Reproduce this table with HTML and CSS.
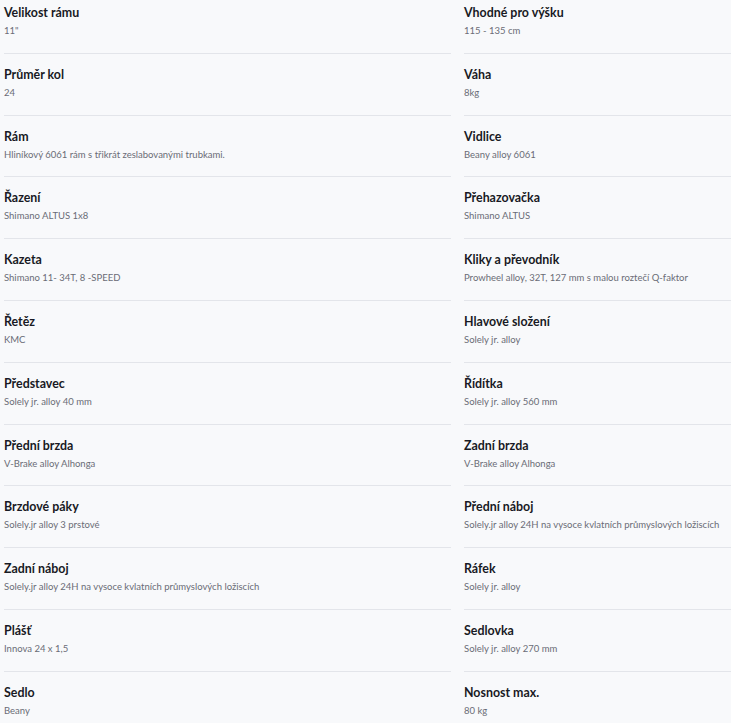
FILE: index.html
```html
<html>
<head>
    <title>Parametry kola</title>
    <link rel="stylesheet" href="styles.css">
</head>
<body>
    <div class="spec-list">
        <div class="spec"><div class="spec-name">Velikost rámu</div><div class="spec-value">11"</div></div>
        <div class="spec"><div class="spec-name">Vhodné pro výšku</div><div class="spec-value">115 - 135 cm</div></div>

        <div class="spec"><div class="spec-name">Průměr kol</div><div class="spec-value">24</div></div>
        <div class="spec"><div class="spec-name">Váha</div><div class="spec-value">8kg</div></div>

        <div class="spec"><div class="spec-name">Rám</div><div class="spec-value">Hliníkový 6061 rám s třikrát zeslabovanými trubkami.</div></div>
        <div class="spec"><div class="spec-name">Vidlice</div><div class="spec-value">Beany alloy 6061</div></div>

        <div class="spec"><div class="spec-name">Řazení</div><div class="spec-value">Shimano ALTUS 1x8</div></div>
        <div class="spec"><div class="spec-name">Přehazovačka</div><div class="spec-value">Shimano ALTUS</div></div>

        <div class="spec"><div class="spec-name">Kazeta</div><div class="spec-value">Shimano 11- 34T, 8 -SPEED</div></div>
        <div class="spec"><div class="spec-name">Kliky a převodník</div><div class="spec-value">Prowheel alloy, 32T, 127 mm s malou roztečí Q-faktor</div></div>

        <div class="spec"><div class="spec-name">Řetěz</div><div class="spec-value">KMC</div></div>
        <div class="spec"><div class="spec-name">Hlavové složení</div><div class="spec-value">Solely jr. alloy</div></div>

        <div class="spec"><div class="spec-name">Představec</div><div class="spec-value">Solely jr. alloy 40 mm</div></div>
        <div class="spec"><div class="spec-name">Řídítka</div><div class="spec-value">Solely jr. alloy 560 mm</div></div>

        <div class="spec"><div class="spec-name">Přední brzda</div><div class="spec-value">V-Brake alloy Alhonga</div></div>
        <div class="spec"><div class="spec-name">Zadní brzda</div><div class="spec-value">V-Brake alloy Alhonga</div></div>

        <div class="spec"><div class="spec-name">Brzdové páky</div><div class="spec-value">Solely.jr alloy 3 prstové</div></div>
        <div class="spec"><div class="spec-name">Přední náboj</div><div class="spec-value">Solely.jr alloy 24H na vysoce kvlatních průmyslových ložiscích</div></div>

        <div class="spec"><div class="spec-name">Zadní náboj</div><div class="spec-value">Solely.jr alloy 24H na vysoce kvlatních průmyslových ložiscích</div></div>
        <div class="spec"><div class="spec-name">Ráfek</div><div class="spec-value">Solely jr. alloy</div></div>

        <div class="spec"><div class="spec-name">Plášť</div><div class="spec-value">Innova 24 x 1,5</div></div>
        <div class="spec"><div class="spec-name">Sedlovka</div><div class="spec-value">Solely jr. alloy 270 mm</div></div>

        <div class="spec"><div class="spec-name">Sedlo</div><div class="spec-value">Beany</div></div>
        <div class="spec"><div class="spec-name">Nosnost max.</div><div class="spec-value">80 kg</div></div>
    </div>
</body>
</html>
```

FILE: styles.css
```css
html {
    overflow: hidden;
}

body {
    margin: 0;
    padding-left: 4px;
    background-color: #f8f9fb;
    font-family: 'Lato', 'Noto Sans', sans-serif;
}

.spec-list {
    display: grid;
    grid-template-columns: 447px 1fr;
    column-gap: 13px;
    margin-top: -8px;
}

.spec {
    padding: 12px 0 14.8px 0;
    border-bottom: 1px solid #e3e5ea;
}

.spec-name {
    font-size: 12.4px;
    line-height: 18px;
    font-weight: bold;
    color: #181a24;
    margin-bottom: 2px;
}

.spec-value {
    font-size: 9.5px;
    line-height: 14px;
    color: #6a6c76;
    white-space: nowrap;
}
```
